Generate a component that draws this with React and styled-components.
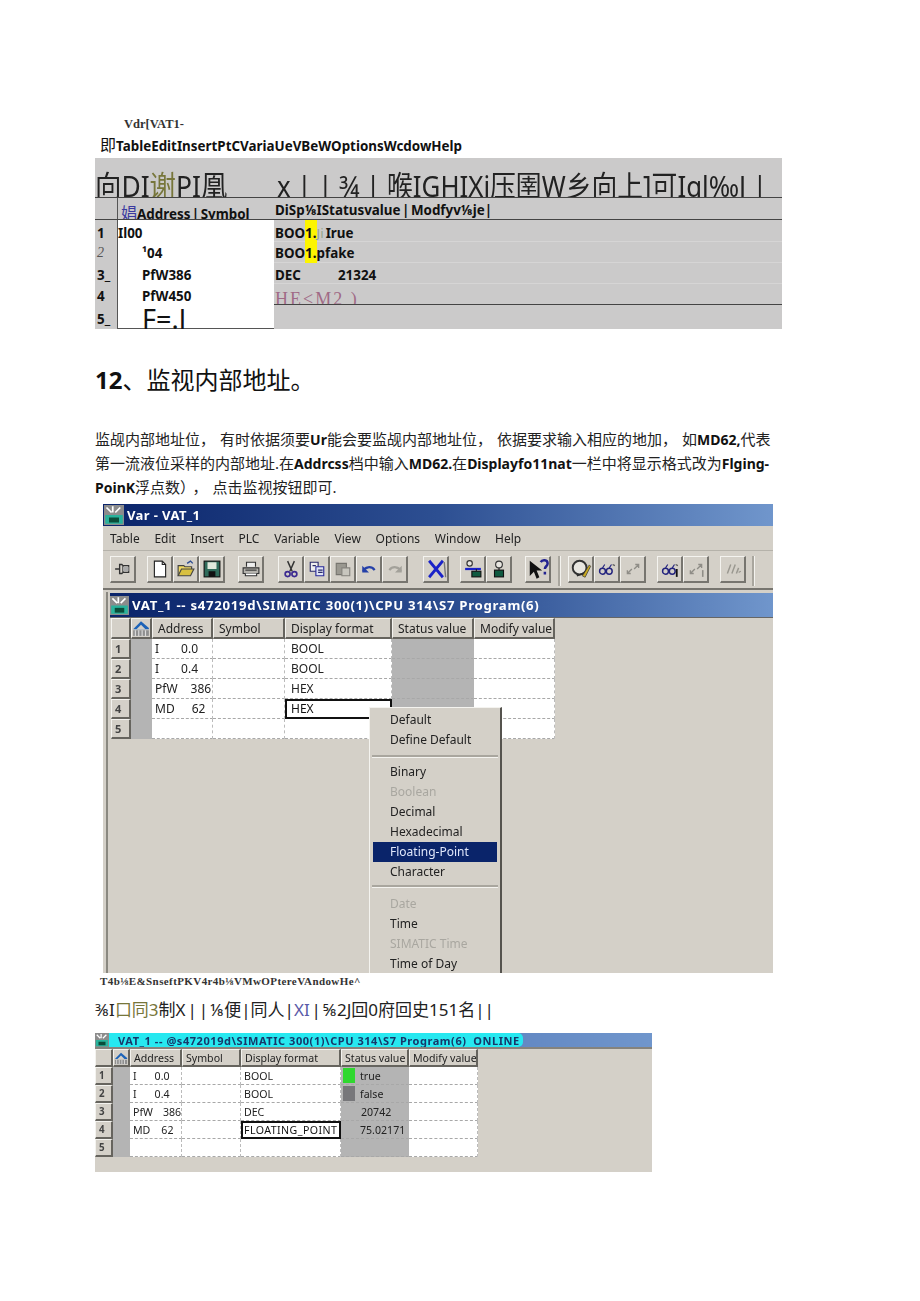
import React from 'react'
import styled, { createGlobalStyle } from 'styled-components'

const cjk = '"Noto Sans", "Noto Sans CJK SC", sans-serif'
const ui = '"Noto Sans", "Open Sans", sans-serif'

const Global = createGlobalStyle`
  html, body { margin: 0; padding: 0; background: #fff; }
  body { font-family: ${cjk}; color: #111; }
`

const Page = styled.div`
  width: 920px;
  height: 1301px;
  box-sizing: border-box;
  padding: 116px 0 0 95px;
  overflow: hidden;
`

const SmallCaption = styled.div`
  height: 16px;
  padding-left: 29px;
  font: bold 12.5px/16px "Liberation Serif", serif;
  color: #333;
`

const MenuLine = styled.div`
  height: 26px;
  line-height: 27px;
  padding-left: 5px;
  font-size: 13.4px;
  font-weight: 700;
  white-space: nowrap;
  span { font-size: 16px; font-weight: 400; }
`

/* first table, the broken copy of the VAT */
const TopTable = styled.div`
  width: 687px;
  height: 171px;
  background: #cbcaca;
  display: flex;
  flex-direction: column;
`

const BigBar = styled.div`
  height: 40px;
  box-sizing: border-box;
  border-bottom: 1px solid #444;
  display: grid;
  grid-template-columns: 182px 1fr;
  overflow: hidden;
  font-size: 29px;
  line-height: 40px;
  padding-top: 8px;
  white-space: nowrap;
  color: #222;
`

const Squeezed = styled.div`
  transform: scaleX(${p => p.$x});
  transform-origin: left center;
`

const Olive = styled.span`
  color: ${p => p.$c || '#77763a'};
`

const TopHead = styled.div`
  height: 22px;
  box-sizing: border-box;
  border-bottom: 1px solid #444;
  display: grid;
  grid-template-columns: 22px 157px 1fr;
  overflow: hidden;
  font-size: 13.4px;
  font-weight: 700;
  white-space: nowrap;
  line-height: 24px;
`

const TopHeadMid = styled.div`
  border-left: 1px solid #555;
  padding-left: 3px;
  line-height: 30px;
  word-spacing: -2px;
  span { color: #3b3aa0; font-weight: 400; font-size: 16px; }
`

const TopHeadRight = styled.div`
  padding-left: 1px;
  word-spacing: -2px;
`

const TopRow = styled.div`
  height: ${p => p.$h}px;
  flex: none;
  display: grid;
  grid-template-columns: 22px 157px 1fr;
  grid-template-rows: minmax(0, 1fr);
  overflow: hidden;
  font-size: 13.4px;
  font-weight: 700;
  line-height: ${p => p.$lh}px;
  white-space: nowrap;
`

const TopNum = styled.div`
  padding-left: 2px;
  ${p => p.$faint && 'font-family: "Liberation Serif", serif; font-style: italic; font-weight: 400; font-size: 14px; color: #555;'}
`

const TopWhite = styled.div`
  background: #fff;
  border-left: 1px solid #555;
  padding-left: ${p => p.$in || 0}px;
  font-size: ${p => p.$size || 13.4}px;
  font-weight: ${p => (p.$size ? 400 : 700)};
  ${p => p.$last && 'border-bottom: 1px solid #555;'}
`

const TopStat = styled.div`
  display: flex;
  padding-left: 1px;
  box-sizing: border-box;
  border-bottom: ${p => p.$line || '1px solid #d6d5d5'};
  ${p => p.$line && 'overflow: hidden;'}
`

const Hl = styled.span`
  background: #fdf500;
  margin-bottom: -1px;
`

const FaintG = styled.span`
  color: #94a68c;
  font-weight: 400;
  padding-right: 2px;
`

const Pink = styled.span`
  font-family: "Liberation Serif", serif;
  font-weight: 400;
  font-size: 18px;
  line-height: 31px;
  color: #a06a86;
  letter-spacing: 2px;
`

const Heading = styled.h2`
  margin: 33px 0 0;
  height: 36px;
  font-size: 24px;
  line-height: 36px;
  font-weight: 400;
  b { font-weight: 700; }
`

const Para = styled.div`
  margin-top: 29px;
  font-size: 15px;
  line-height: 24px;
  color: #222;
  b { font-weight: 700; font-size: 14px; color: #111; }
`

const ParaLine = styled.div`
  height: 24px;
  white-space: nowrap;
`

const Cm = styled.span`
  margin-right: 5px;
`

/* windows */
const Win = styled.div`
  position: relative;
  margin: ${p => p.$m};
  width: ${p => p.$w}px;
  height: ${p => p.$h}px;
  background: #d4d0c8;
  overflow: hidden;
  font-family: ${ui};
  filter: blur(0.6px);
  color: #222;
`

const TitleBar = styled.div`
  height: 22px;
  display: flex;
  align-items: center;
  gap: 3px;
  padding-left: 1px;
  background: linear-gradient(90deg, #0a246a 0%, #2d4f92 50%, #7096cc 100%);
  color: #fff;
  font-size: 13px;
  letter-spacing: 0.4px;
  font-weight: 700;
`

const MenuBar = styled.div`
  height: 24px;
  display: flex;
  gap: 14.7px;
  align-items: center;
  padding-left: 7px;
  font-size: 12px;
  border-bottom: 1px solid #b5b2aa;
`

const Toolbar = styled.div`
  height: 39px;
  box-sizing: border-box;
  display: flex;
  align-items: flex-start;
  padding: 5px 0 0 7px;
  border-bottom: 2px solid #77756f;
`

const Group = styled.div`
  display: flex;
  margin-left: ${p => p.$ml || 0}px;
`

const Btn = styled.div`
  width: 26px;
  height: 27px;
  box-sizing: border-box;
  display: flex;
  align-items: center;
  justify-content: center;
  border-top: 1px solid #f4f3ef;
  border-left: 1px solid #f4f3ef;
  border-right: 2px solid #77756f;
  border-bottom: 2px solid #77756f;
`

const ToolSep = styled.div`
  width: 2px;
  height: 30px;
  margin: 0 ${p => p.$r || 0}px 0 ${p => p.$l || 0}px;
  background: #a9a69e;
  border-right: 1px solid #f4f3ef;
`

const InnerTitle = styled.div`
  margin: 3px 0 0 7px;
  height: 24px;
  display: flex;
  align-items: center;
  gap: 3px;
  background: linear-gradient(90deg, #0a246a 0%, #2d4f92 55%, #7096cc 100%);
  color: #fff;
  font-size: 13.2px;
  font-weight: 700;
  letter-spacing: 0.7px;
  white-space: nowrap;
  border-bottom: 1px solid #666;
`

const LeftEdge = styled.div`
  position: absolute;
  left: 3px;
  top: 88px;
  bottom: 0;
  width: 2px;
  background: #8a8880;
`

const GridWrap = styled.div`
  position: relative;
  margin-left: ${p => p.$ml}px;
`

const GridRow = styled.div`
  display: grid;
  grid-template-columns: ${p => p.$cols};
  height: ${p => p.$h}px;
  width: max-content;
  font-size: ${p => p.$fs}px;
  line-height: ${p => p.$h - 2}px;
  white-space: nowrap;
`

const HeadCell = styled.div`
  box-sizing: border-box;
  padding-left: ${p => p.$pad ?? 5}px;
  border-top: 1px solid #f4f3ef;
  border-left: 1px solid #f4f3ef;
  border-right: 2px solid #66645e;
  border-bottom: 2px solid #66645e;
  overflow: hidden;
`

const CornerCell = styled(HeadCell)`
  padding: 0;
  display: flex;
  align-items: center;
  justify-content: center;
`

const NumCell = styled(HeadCell)`
  padding-left: 3px;
  font-weight: 700;
  font-size: 0.92em;
  color: #444;
`

const GutterCell = styled.div`
  background: #b4b4b4;
`

const Cell = styled.div`
  box-sizing: border-box;
  background: ${p => (p.$gray ? '#b4b4b4' : '#fff')};
  border-bottom: 1px dashed #a8a8a8;
  border-right: 1px dashed ${p => (p.$gray ? '#b4b4b4' : '#bbb')};
  padding-left: ${p => p.$in ?? 3}px;
  display: flex;
  align-items: center;
  gap: 5px;
  overflow: hidden;
  ${p => p.$focus && 'outline: 2px solid #111; outline-offset: -2px; color: #111;'}
`

const Gap = styled.span`
  display: inline-block;
  width: ${p => p.$w}px;
`

const WideText = styled.span`
  letter-spacing: 0.45px;
`

const Lamp = styled.span`
  width: 12px;
  height: 15px;
  background: ${p => p.$c};
  flex: none;
`

const PopMenu = styled.div`
  position: absolute;
  left: 258px;
  top: 89px;
  width: 133px;
  height: 300px;
  box-sizing: border-box;
  background: #d4d0c8;
  border-top: 1px solid #f4f3ef;
  border-left: 1px solid #f4f3ef;
  border-right: 2px solid #55534e;
  padding: 2px 2px 0;
  font-size: 12px;
  z-index: 2;
`

const PopItem = styled.div`
  height: 20px;
  line-height: 20px;
  padding-left: 17px;
  margin: 0 1px;
  color: ${p => (p.$off ? '#a9a7a0' : '#222')};
  ${p => p.$on && 'background: #0a246a; color: #dfe6fa;'}
`

const PopSep = styled.div`
  height: 2px;
  margin: ${p => p.$m};
  background: #a9a69e;
  border-bottom: 1px solid #f4f3ef;
`

const TinyCaption = styled.div`
  margin: 1px 0 0 5px;
  height: 14px;
  font: bold 11px/14px "Liberation Serif", serif;
  color: #333;
  letter-spacing: 0.4px;
  white-space: nowrap;
`

const GarbledLine = styled.div`
  margin-top: 12px;
  height: 20px;
  font-size: 17px;
  line-height: 20px;
  word-spacing: -2.5px;
  white-space: nowrap;
  color: #222;
`

const OnlineBar = styled.div`
  height: 14px;
  display: flex;
  background: linear-gradient(90deg, #3a5ea8 0%, #7096cc 100%);
  border-bottom: 2px solid #85837d;
`

const OnlineLabel = styled.div`
  width: 428px;
  display: flex;
  align-items: center;
  gap: 9px;
  background: #27e8f0;
  border-radius: 0 5px 5px 0;
  color: #16386a;
  font-size: 11px;
  font-weight: 700;
  letter-spacing: 0.55px;
  white-space: nowrap;
  overflow: hidden;
`

/* drawings */
const Ico = ({ children, s = 18 }) => (
  <svg width={s} height={s} viewBox="0 0 16 16" fill="none">{children}</svg>
)

const AppIcon = ({ s = 20 }) => (
  <svg width={s} height={s} viewBox="0 0 16 16">
    <rect width="16" height="16" fill="#8c8c8c" />
    <path d="M2 2l4 4M7 1v5M13 2L9 6" stroke="#fff" strokeWidth="1.4" />
    <path d="M1 8h14v7H1z" fill="#29b39c" />
    <rect x="4" y="10" width="8" height="4" fill="#0a4d3a" />
  </svg>
)

const CornerIcon = () => (
  <svg width="18" height="18" viewBox="0 0 16 16">
    <path d="M1 9L8 2l7 6v1H1z" fill="#1d63b8" />
    <path d="M4 9L8 5l4 4z" fill="#d4d0c8" />
    <rect x="1" y="10" width="14" height="5" fill="#8f8f8f" />
    <path d="M3 10v5M6 10v5M9 10v5M12 10v5" stroke="#ddd" />
  </svg>
)

const Glasses = ({ one }) => (
  <Ico>
    <circle cx="4" cy="10" r="2.6" stroke="#23237e" strokeWidth="1.3" />
    <circle cx="10" cy="10" r="2.6" stroke="#23237e" strokeWidth="1.3" />
    <path d="M4 7l2-3M10 7l2-3" stroke="#23237e" />
    <path d="M13 4l2 1" stroke="#555" />
    {one && <path d="M14 8v7" stroke="#111" strokeWidth="1.6" />}
  </Ico>
)

const Arrows = ({ one }) => (
  <Ico>
    <path d="M3 12l4-4M3 9v3h3M9 8l4-4M10 4h3v3" stroke="#8f8d87" strokeWidth="1.2" />
    {one && <path d="M14 9v6" stroke="#8f8d87" strokeWidth="1.4" />}
  </Ico>
)

const tools = [
  [11, [
    <Ico key="pin"><path d="M1 8h4M5 4h2l1 1h5v6H8l-1 1H5zM8 5v6" stroke="#333" strokeWidth="1.2" /><path d="M8 6h5v4H8z" fill="#aaa" /></Ico>,
  ]],
  [11, [
    <Ico key="new"><path d="M3 1h7l3 3v11H3z" fill="#fff" stroke="#222" /><path d="M10 1v3h3" stroke="#222" /></Ico>,
    <Ico key="open"><path d="M1 14V5h5l1 1h6v2" fill="#f0d860" stroke="#444" /><path d="M1 14l3-6h11l-3 6z" fill="#d8c040" stroke="#444" /><path d="M9 3l3-2 2 2" stroke="#2a4a90" strokeWidth="1.2" /></Ico>,
    <Ico key="save"><rect x="1" y="1" width="14" height="14" fill="#2f6b5a" stroke="#111" /><rect x="4" y="2" width="8" height="6" fill="#dfe8dc" /><rect x="5" y="10" width="6" height="5" fill="#111" /></Ico>,
  ]],
  [13, [
    <Ico key="print"><path d="M4 6V2h8v4" fill="#eee" stroke="#333" /><path d="M1 7h14v5H1z" fill="#b5b3ad" stroke="#333" /><path d="M3 12v2h10v-2" fill="#fff" stroke="#333" /><path d="M3 9h10" stroke="#333" /></Ico>,
  ]],
  [14, [
    <Ico key="cut"><path d="M5 1l4 9M11 1L7 10" stroke="#333" strokeWidth="1.3" /><circle cx="5" cy="12.5" r="2.2" stroke="#3c2a90" strokeWidth="1.5" /><circle cx="11" cy="12.5" r="2.2" stroke="#3c2a90" strokeWidth="1.5" /></Ico>,
    <Ico key="copy"><path d="M2 2h7v8H2z" fill="#eee" stroke="#2a2a6a" /><path d="M7 6h7v8H7z" fill="#dfe4f4" stroke="#2a2a9a" /><path d="M9 9h4M9 11h4M4 5h3" stroke="#2a2a6a" /></Ico>,
    <Ico key="paste"><path d="M2 3h9v10H2z" fill="#9a9890" stroke="#77756f" /><path d="M7 7h7v7H7z" fill="#c8c6be" stroke="#85837d" /></Ico>,
    <Ico key="undo"><path d="M3 10c1-4 7-5 10-1" stroke="#2540a8" strokeWidth="2" /><path d="M2 5v6h6z" fill="#2540a8" /></Ico>,
    <Ico key="redo"><path d="M13 10c-1-4-7-5-10-1" stroke="#a3a19a" strokeWidth="2" /><path d="M14 5v6H8z" fill="#a3a19a" /></Ico>,
  ]],
  [15, [
    <Ico key="x" s={22}><path d="M3 2l10 12M13 2L3 14" stroke="#1a22c8" strokeWidth="2" /><path d="M14 3l1 11" stroke="#777" /></Ico>,
  ]],
  [11, [
    <Ico key="net"><circle cx="5" cy="3" r="2.4" fill="#e8e6e0" stroke="#333" /><path d="M1 8h14" stroke="#1a22c8" strokeWidth="2" /><path d="M11 8v2" stroke="#222" /><rect x="7" y="10" width="8" height="5" fill="#0f5a40" stroke="#111" /></Ico>,
    <Ico key="st"><circle cx="8" cy="4" r="3" fill="#e8e6e0" stroke="#333" /><path d="M8 7v2" stroke="#222" /><rect x="4" y="9" width="8" height="6" fill="#0f5a40" stroke="#111" /></Ico>,
  ]],
  [13, [
    <Ico key="help" s={22}><path d="M2 2v11l3-3 2 5 2-1-2-5h4z" fill="#111" /><path d="M10 3c1-2 5-2 5 1 0 2-2 2-2 4M13 10v2" stroke="#232390" strokeWidth="1.8" /></Ico>,
  ]],
]

const tools2 = [
  [9, [
    <Ico key="w" s={22}><circle cx="7" cy="7" r="5" fill="#e8e6e0" stroke="#333" strokeWidth="1.4" /><path d="M5 13l5-2" stroke="#2a2a2a" /><path d="M9 13l5-8 1 1-4 8z" fill="#c8a820" stroke="#333" strokeWidth=".5" /></Ico>,
    <Glasses key="g" />,
    <Arrows key="a" />,
  ]],
  [11, [<Glasses key="g1" one />, <Arrows key="a1" one />]],
  [11, [
    <Ico key="s"><path d="M3 12l3-8M7 12l3-8M11 12l2-5" stroke="#9a9890" strokeWidth="1.3" /><path d="M13 11l2-1" stroke="#9a9890" /></Ico>,
  ]],
]

const Tools = () => (
  <Toolbar>
    {tools.map(([ml, icons], i) => (
      <Group key={i} $ml={i === 0 ? 0 : ml}>
        {icons.map((ic, j) => <Btn key={j}>{ic}</Btn>)}
      </Group>
    ))}
    <ToolSep $l={7} $r={7} />
    {tools2.map(([ml, icons], i) => (
      <Group key={i} $ml={i === 0 ? 0 : ml}>
        {icons.map((ic, j) => <Btn key={j}>{ic}</Btn>)}
      </Group>
    ))}
    <ToolSep $l={6} />
  </Toolbar>
)

const cols1 = '20px 21px 61px 72px 107px 82px 81px'
const cols2 = '18px 17px 52px 59px 100px 68px 69px'

const rows1 = [
  ['1', <>I<Gap $w={12} />0.0</>, 'BOOL'],
  ['2', <>I<Gap $w={12} />0.4</>, 'BOOL'],
  ['3', <>PfW<Gap $w={3} />386</>, 'HEX'],
  ['4', <>MD<Gap $w={7} />62</>, 'HEX', true],
  ['5', '', ''],
]

const rows2 = [
  ['1', <>I<Gap $w={8} />0.0</>, 'BOOL', <><Lamp $c="#2fd82f" />true</>],
  ['2', <>I<Gap $w={8} />0.4</>, 'BOOL', <><Lamp $c="#77777a" />false</>],
  ['3', <>PfW<Gap $w={1} />386</>, 'DEC', <><Gap $w={13} />20742</>],
  ['4', <>MD<Gap $w={1} />62</>, <WideText>FLOATING_POINT</WideText>, <><Gap $w={12} />75.02171</>, true],
  ['5', '', '', ''],
]

const menuItems = [
  ['Default'], ['Define Default'], 'sep1',
  ['Binary'], ['Boolean', 'off'], ['Decimal'], ['Hexadecimal'], ['Floating-Point', 'on'], ['Character'], 'sep2',
  ['Date', 'off'], ['Time'], ['SIMATIC Time', 'off'], ['Time of Day'],
]

const labels = ['Address', 'Symbol', 'Display format', 'Status value', 'Modify value']

const HeadRow = ({ cols, h, fs, pad }) => (
  <GridRow $cols={cols} $h={h} $fs={fs}>
    <HeadCell />
    <CornerCell><CornerIcon /></CornerCell>
    {labels.map(l => <HeadCell key={l} $pad={pad}>{l}</HeadCell>)}
  </GridRow>
)

export default function App() {
  return (
    <Page>
      <Global />
      <SmallCaption>Vdr[VAT1-</SmallCaption>
      <MenuLine><span>即</span>TableEditInsertPtCVariaUeVBeWOptionsWcdowHelp</MenuLine>

      <TopTable>
        <BigBar>
          <Squeezed $x={0.91}>向DI<Olive>谢</Olive>PI凰</Squeezed>
          <Squeezed $x={0.89}>x | | ¾ | 喉IGHIXj压圉W乡向上]可Iql‰J |</Squeezed>
        </BigBar>
        <TopHead>
          <div />
          <TopHeadMid><span>娼</span>Address | Symbol</TopHeadMid>
          <TopHeadRight>DiSp⅛IStatusvalue | Modfyv⅛je|</TopHeadRight>
        </TopHead>
        <TopRow $h={22} $lh={26}>
          <TopNum>1</TopNum>
          <TopWhite>Il00</TopWhite>
          <TopStat><span>BOO</span><Hl>1.</Hl><FaintG>Ji</FaintG><span>Irue</span></TopStat>
        </TopRow>
        <TopRow $h={21} $lh={22}>
          <TopNum $faint>2</TopNum>
          <TopWhite $in={24}>¹04</TopWhite>
          <TopStat><span>BOO</span><Hl>1.</Hl><span>pfake</span></TopStat>
        </TopRow>
        <TopRow $h={21} $lh={24}>
          <TopNum>3_</TopNum>
          <TopWhite $in={24}>PfW386</TopWhite>
          <TopStat><span>DEC</span><Gap $w={37} /><span>21324</span></TopStat>
        </TopRow>
        <TopRow $h={21} $lh={24}>
          <TopNum>4</TopNum>
          <TopWhite $in={24}>PfW450</TopWhite>
          <TopStat $line="1px solid #444"><Pink>HE&lt;M2 )</Pink></TopStat>
        </TopRow>
        <TopRow $h={24} $lh={28}>
          <TopNum>5_</TopNum>
          <TopWhite $in={24} $size={27} $last>F=.J</TopWhite>
          <div />
        </TopRow>
      </TopTable>

      <Heading><b>12</b>、监视内部地址。</Heading>

      <Para>
        <ParaLine>监觇内部地址位<Cm>，</Cm>有时依据须要<b>Ur</b>能会要监觇内部地址位<Cm>，</Cm>依据要求输入相应的地加<Cm>，</Cm>如<b>MD62,</b>代表</ParaLine>
        <ParaLine>第一流液位采样的内部地址.在<b>Addrcss</b>档中输入<b>MD62.</b>在<b>Displayfo11nat</b>一栏中将显示格式改为<b>Flging-</b></ParaLine>
        <ParaLine><b>PoinK</b>浮点数<Cm>）</Cm><Cm>，</Cm>点击监视按钮即可.</ParaLine>
      </Para>

      <Win $m="5px 0 0 8px" $w={670} $h={469}>
        <TitleBar><AppIcon />Var - VAT_1</TitleBar>
        <MenuBar>
          {['Table', 'Edit', 'Insert', 'PLC', 'Variable', 'View', 'Options', 'Window', 'Help'].map(m => <span key={m}>{m}</span>)}
        </MenuBar>
        <Tools />
        <LeftEdge />
        <InnerTitle><AppIcon s={19} />VAT_1 -- s472019d\SIMATIC 300(1)\CPU 314\S7 Program(6)</InnerTitle>
        <GridWrap $ml={8}>
          <HeadRow cols={cols1} h={21} fs={12} />
          {rows1.map(([n, addr, fmt, focus]) => (
            <GridRow key={n} $cols={cols1} $h={20} $fs={12}>
              <NumCell>{n}</NumCell>
              <GutterCell />
              <Cell>{addr}</Cell>
              <Cell />
              <Cell $focus={focus} $in={6}>{fmt}</Cell>
              <Cell $gray />
              <Cell />
            </GridRow>
          ))}
          <PopMenu>
            {menuItems.map(it => {
              if (it === 'sep1') return <PopSep key={it} $m="5px 0 4px" />
              if (it === 'sep2') return <PopSep key={it} $m="3px 0 6px" />
              return <PopItem key={it[0]} $off={it[1] === 'off'} $on={it[1] === 'on'}>{it[0]}</PopItem>
            })}
          </PopMenu>
        </GridWrap>
      </Win>

      <TinyCaption>T4b⅛E&amp;SnseftPKV4r4b⅛VMwOPtereVAndowHe^</TinyCaption>
      <GarbledLine>
        ⅜I<Olive>口同3</Olive>制X | | ⅛便|同人|<Olive $c="#5a5aa8">XI</Olive> | ⅝2J回0府回史151名||
      </GarbledLine>

      <Win $m="13px 0 0 0" $w={557} $h={139}>
        <OnlineBar>
          <OnlineLabel><AppIcon s={14} />VAT_1 -- @s472019d\SIMATIC 300(1)\CPU 314\S7 Program(6)&nbsp; ONLINE</OnlineLabel>
        </OnlineBar>
        <GridWrap $ml={0}>
          <HeadRow cols={cols2} h={18} fs={10.6} pad={3} />
          {rows2.map(([n, addr, fmt, stat, focus]) => (
            <GridRow key={n} $cols={cols2} $h={18} $fs={10.6}>
              <NumCell>{n}</NumCell>
              <GutterCell />
              <Cell>{addr}</Cell>
              <Cell />
              <Cell $focus={focus}>{fmt}</Cell>
              <Cell $gray $in={2}>{stat}</Cell>
              <Cell />
            </GridRow>
          ))}
        </GridWrap>
      </Win>
    </Page>
  )
}
